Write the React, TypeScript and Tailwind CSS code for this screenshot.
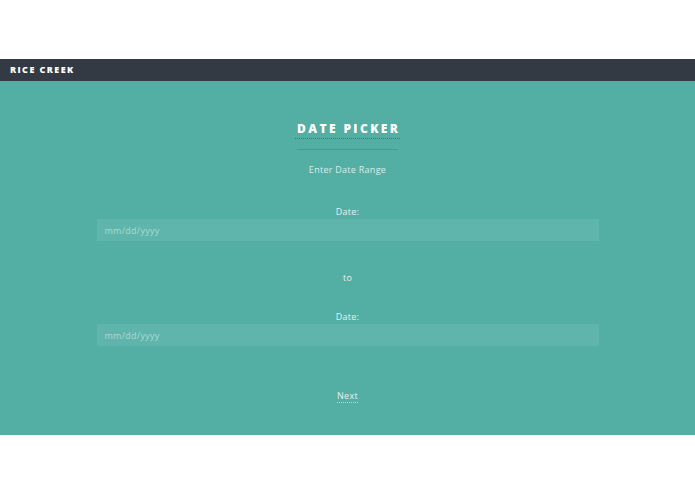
export default function App() {
  return (
    <div className="min-h-screen bg-white font-['Open_Sans',sans-serif]">
      <div className="h-[59px]" />
      <div className="flex h-[22px] items-center bg-[#333a44] px-[10px]">
        <span className="text-[9px] font-extrabold uppercase tracking-[0.16em] text-white">Rice Creek</span>
      </div>
      <main className="flex h-[354px] flex-col items-center bg-[#53aea4] pt-[40px]">
        <div className="flex flex-col items-center">
          <h1 className="border-b border-dotted border-[#5c6b6a] pb-[1px] pl-[0.2em] text-[12px] font-extrabold uppercase leading-[16px] tracking-[0.2em] text-white">
            Date Picker
          </h1>
          <div className="mt-[10px] h-px w-[101px] bg-[#469a90]" />
        </div>
        <p className="mt-[14px] text-[9px] leading-[12px] tracking-[0.03em] text-[#d9efec]">Enter Date Range</p>

        <label className="mt-[30px] text-[9px] leading-[12px] tracking-[0.03em] text-[#e4f3f1]">Date:</label>
        <input
          type="text"
          placeholder="mm/dd/yyyy"
          className="mt-[1px] h-[22px] w-[502px] bg-[#5fb5ab] px-[8px] text-[9px] tracking-[0.03em] text-white outline-none placeholder:text-[#a9dbd5]"
        />

        <p className="mt-[31px] text-[9px] leading-[12px] tracking-[0.03em] text-[#e4f3f1]">to</p>

        <label className="mt-[27px] text-[9px] leading-[12px] tracking-[0.03em] text-[#e4f3f1]">Date:</label>
        <input
          type="text"
          placeholder="mm/dd/yyyy"
          className="mt-[1px] h-[22px] w-[502px] bg-[#5fb5ab] px-[8px] text-[9px] tracking-[0.03em] text-white outline-none placeholder:text-[#a9dbd5]"
        />

        <button className="mt-[44px] border-b border-dotted border-[#b5ddd8] text-[9px] leading-[12px] tracking-[0.03em] text-[#e4f3f1]">
          Next
        </button>
      </main>
    </div>
  );
}
